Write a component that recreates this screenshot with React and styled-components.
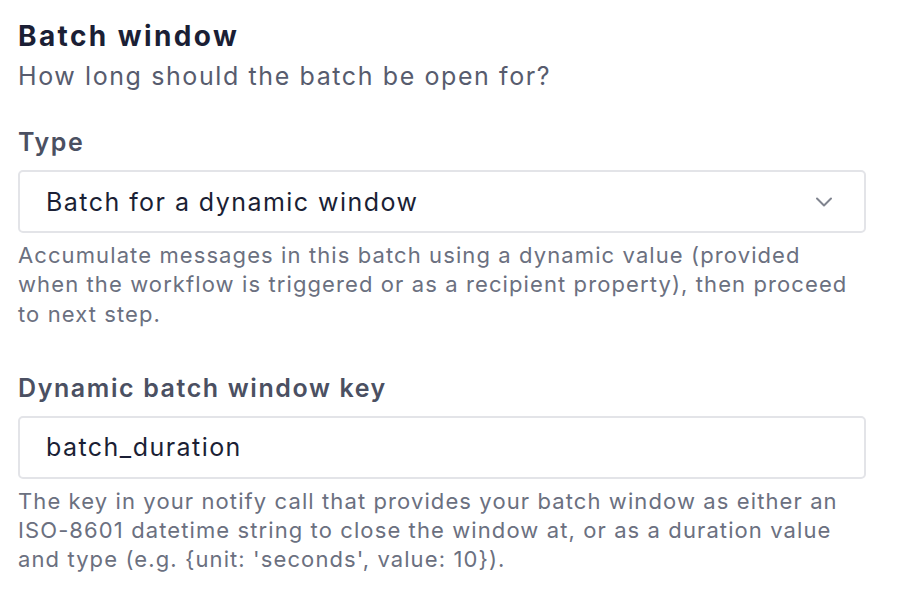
import React from "react";
import styled, { createGlobalStyle } from "styled-components";

const GlobalStyle = createGlobalStyle`
  html, body {
    margin: 0;
    padding: 0;
    background: #ffffff;
  }
  body {
    font-family: Inter, "Noto Sans", sans-serif;
    -webkit-font-smoothing: antialiased;
  }
`;

const Page = styled.div`
  width: 900px;
  height: 600px;
  padding: 18px 34px 0 18px;
  box-sizing: border-box;
  display: flex;
  flex-direction: column;
`;

const Header = styled.div`
  display: flex;
  flex-direction: column;
  margin-bottom: 34px;
`;

const Title = styled.h2`
  margin: 0;
  font-size: 28px;
  line-height: 36px;
  font-weight: 700;
  color: #1b1f35;
  letter-spacing: 2.4px;
`;

const Subtitle = styled.p`
  margin: 6px 0 0;
  font-size: 25px;
  line-height: 32px;
  font-weight: 400;
  color: #575c6e;
  letter-spacing: 1.6px;
`;

const Field = styled.div`
  display: flex;
  flex-direction: column;
  margin-bottom: ${(p) => p.$gap || 0}px;
`;

const Label = styled.label`
  font-size: 25px;
  line-height: 32px;
  font-weight: 600;
  color: #4b5062;
  letter-spacing: 1.6px;
  margin-bottom: 12px;
`;

const Box = styled.div`
  height: 63px;
  box-sizing: border-box;
  border: 2px solid #e3e4e8;
  border-radius: 5px;
  padding: 0 26px;
  display: flex;
  align-items: center;
  justify-content: space-between;
  font-size: 25px;
  letter-spacing: 1.45px;
  color: #1b1f35;
`;

const Chevron = styled.svg`
  width: 20px;
  height: 20px;
  margin-right: 4px;
  color: #80848f;
`;

const Help = styled.p`
  margin: 8px 0 0;
  font-size: 22px;
  line-height: 29.3px;
  letter-spacing: 1.1px;
  color: #6b7080;
`;

export default function App() {
  return (
    <>
      <GlobalStyle />
      <Page>
        <Header>
          <Title>Batch window</Title>
          <Subtitle>How long should the batch be open for?</Subtitle>
        </Header>
        <Field $gap={43}>
          <Label>Type</Label>
          <Box>
            <span>Batch for a dynamic window</span>
            <Chevron viewBox="0 0 20 20" fill="none">
              <path
                d="M3 6.5L10 13.5L17 6.5"
                stroke="currentColor"
                strokeWidth="2"
                strokeLinecap="round"
                strokeLinejoin="round"
              />
            </Chevron>
          </Box>
          <Help>
            Accumulate messages in this batch using a dynamic value (provided
            <br />
            when the workflow is triggered or as a recipient property), then
            proceed
            <br />
            to next step.
          </Help>
        </Field>
        <Field>
          <Label>Dynamic batch window key</Label>
          <Box>
            <span>batch_duration</span>
          </Box>
          <Help>
            The key in your notify call that provides your batch window as
            either an
            <br />
            ISO-8601 datetime string to close the window at, or as a duration
            value
            <br />
            and type (e.g. {"{unit: 'seconds', value: 10}"}).
          </Help>
        </Field>
      </Page>
    </>
  );
}
